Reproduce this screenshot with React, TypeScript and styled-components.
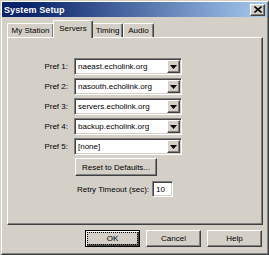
import React from "react";
import styled, { createGlobalStyle, css } from "styled-components";

const Global = createGlobalStyle`
  html, body { margin: 0; padding: 0; background: #d4d0c8; }
  body { font-family: "Liberation Sans", Arial, sans-serif; font-size: 8px; color: #000; }
  * { box-sizing: border-box; }
`;

const Window = styled.div`
  width: 269px;
  height: 255px;
  padding: 2px;
  background: #d4d0c8;
  box-shadow: inset 1px 1px #d4d0c8, inset -1px -1px #404040, inset 2px 2px #ffffff, inset -2px -2px #808080;
  display: flex;
  flex-direction: column;
`;

const TitleBar = styled.div`
  height: 15px;
  background: linear-gradient(to right, #0a246a 10%, #a6caf0);
  display: flex;
  align-items: center;
  justify-content: space-between;
  padding: 0 2px 0 2px;
`;

const Title = styled.span`
  color: #fff;
  font-weight: bold;
  font-size: 9px;
  letter-spacing: 0.1px;
`;

const raised = css`
  background: #d4d0c8;
  border: 1px solid;
  border-color: #ffffff #404040 #404040 #ffffff;
  box-shadow: inset -1px -1px #808080;
`;

const sunken = css`
  background: #fff;
  border: 1px solid;
  border-color: #808080 #ffffff #ffffff #808080;
  box-shadow: inset 1px 1px #404040, inset -1px -1px #d4d0c8;
`;

const CloseButton = styled.div`
  ${raised};
  width: 15px;
  height: 12px;
  display: flex;
  align-items: center;
  justify-content: center;
`;

const Body = styled.div`
  padding: 3px 0 0 5px;
  display: flex;
  flex-direction: column;
`;

const TabStrip = styled.div`
  display: flex;
  align-items: flex-end;
  height: 17px;
  position: relative;
  z-index: 1;
`;

const Tab = styled.div<{ $w: number; $active?: boolean }>`
  width: ${(p) => p.$w}px;
  height: ${(p) => (p.$active ? 18 : 14)}px;
  margin: ${(p) => (p.$active ? "0 -1px -1px -1px" : "0")};
  padding-top: ${(p) => (p.$active ? 2 : 1)}px;
  background: #d4d0c8;
  border-top: 1px solid #fff;
  border-left: 1px solid #fff;
  border-right: 1px solid #404040;
  border-radius: 2px 2px 0 0;
  box-shadow: inset -1px 0 #808080;
  text-align: center;
  font-size: 8px;
  line-height: 11px;
  position: relative;
  z-index: ${(p) => (p.$active ? 2 : 1)};
`;

const Panel = styled.div`
  width: 256px;
  height: 188px;
  border: 1px solid;
  border-color: #ffffff #404040 #404040 #ffffff;
  box-shadow: inset -1px -1px #808080;
  padding-top: 20px;
  display: flex;
  flex-direction: column;
`;

const PrefGrid = styled.div`
  display: grid;
  grid-template-columns: 60px 108px;
  column-gap: 6px;
  row-gap: 3px;
  align-items: center;
`;

const Label = styled.span`
  text-align: right;
  white-space: nowrap;
`;

const Combo = styled.div`
  ${sunken};
  height: 17px;
  display: flex;
  align-items: center;
  padding: 2px 2px 2px 3px;
`;

const ComboText = styled.span`
  flex: 1;
  white-space: nowrap;
  overflow: hidden;
`;

const DropButton = styled.div`
  ${raised};
  width: 13px;
  height: 13px;
  margin-right: -1px;
  display: flex;
  align-items: center;
  justify-content: center;
`;

const ResetButton = styled.div`
  ${raised};
  grid-column: 2;
  width: 82px;
  height: 18px;
  margin-left: 1px;
  display: flex;
  align-items: center;
  justify-content: center;
`;

const RetryRow = styled.div`
  display: flex;
  align-items: center;
  gap: 3px;
  padding-left: 69px;
  margin-top: 5px;
`;

const NumberField = styled.div`
  ${sunken};
  width: 21px;
  height: 16px;
  padding: 2px 3px;
  line-height: 11px;
`;

const ButtonRow = styled.div`
  display: flex;
  justify-content: flex-end;
  gap: 6px;
  width: 256px;
  padding-right: 1px;
  margin-top: 5px;
`;

const DialogButton = styled.div<{ $default?: boolean }>`
  ${raised};
  width: 55px;
  height: 17px;
  display: flex;
  align-items: center;
  justify-content: center;
  ${(p) =>
    p.$default &&
    css`
      border-color: #000;
      box-shadow: inset 1px 1px #fff, inset -1px -1px #404040, inset -2px -2px #808080;
    `}
`;

const FocusText = styled.span`
  outline: 1px dotted #000;
  outline-offset: 1px;
  padding: 0 18px;
  margin-top: -1px;
`;

const Arrow = () => (
  <svg width="7" height="4" viewBox="0 0 7 4">
    <path d="M0 0h7L3.5 4z" fill="#000" />
  </svg>
);

const XIcon = () => (
  <svg width="8" height="7" viewBox="0 0 8 7">
    <path d="M0.5 0.5L7.5 6.5M7.5 0.5L0.5 6.5" stroke="#000" strokeWidth="1.6" />
  </svg>
);

const prefs = [
  "naeast.echolink.org",
  "nasouth.echolink.org",
  "servers.echolink.org",
  "backup.echolink.org",
  "[none]",
];

export default function App() {
  return (
    <>
      <Global />
      <Window>
        <TitleBar>
          <Title>System Setup</Title>
          <CloseButton>
            <XIcon />
          </CloseButton>
        </TitleBar>
        <Body>
          <TabStrip>
            <Tab $w={47}>My Station</Tab>
            <Tab $w={40} $active>
              Servers
            </Tab>
            <Tab $w={31}>Timing</Tab>
            <Tab $w={31}>Audio</Tab>
          </TabStrip>
          <Panel>
            <PrefGrid>
              {prefs.map((p, i) => (
                <React.Fragment key={i}>
                  <Label>Pref {i + 1}:</Label>
                  <Combo>
                    <ComboText>{p}</ComboText>
                    <DropButton>
                      <Arrow />
                    </DropButton>
                  </Combo>
                </React.Fragment>
              ))}
              <ResetButton>Reset to Defaults...</ResetButton>
            </PrefGrid>
            <RetryRow>
              <span>Retry Timeout (sec):</span>
              <NumberField>10</NumberField>
            </RetryRow>
          </Panel>
          <ButtonRow>
            <DialogButton $default>
              <FocusText>OK</FocusText>
            </DialogButton>
            <DialogButton>Cancel</DialogButton>
            <DialogButton>Help</DialogButton>
          </ButtonRow>
        </Body>
      </Window>
    </>
  );
}
